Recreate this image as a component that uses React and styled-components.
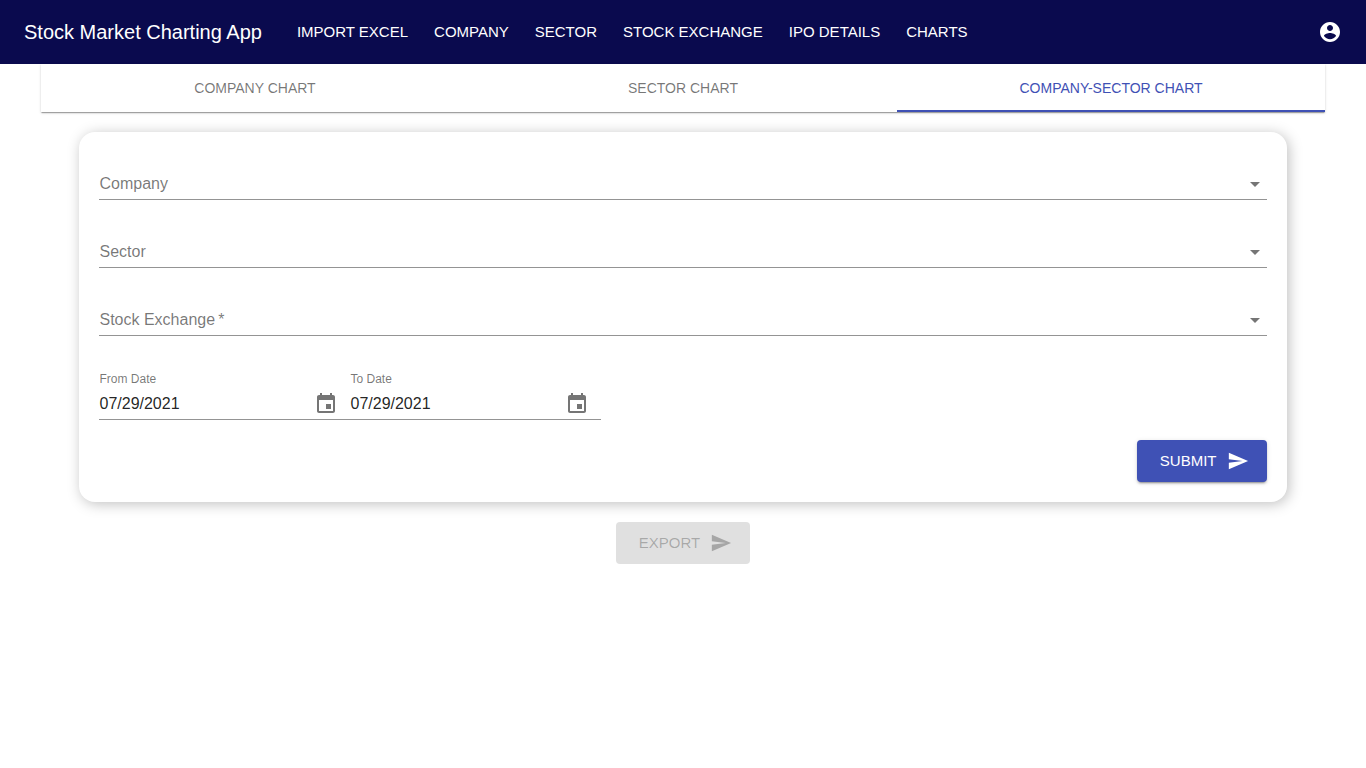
import React, { useState } from "react";
import styled, { createGlobalStyle, css } from "styled-components";

const GlobalStyle = createGlobalStyle`
  *, *::before, *::after { box-sizing: border-box; }
  body {
    margin: 0;
    background: #fff;
    color: rgba(0, 0, 0, 0.87);
    font-family: "Liberation Sans", Arial, sans-serif;
    font-size: 16px;
    line-height: 20px;
  }
  button, input, select { font: inherit; color: inherit; }
`;

const resetButton = css`
  border: 0;
  margin: 0;
  background: transparent;
  cursor: pointer;
`;

const AppBar = styled.header`
  display: flex;
  align-items: center;
  min-height: 64px;
  padding: 0 24px;
  background: #0a0a4e;
  color: #fff;
`;

const Title = styled.h1`
  margin: 0 35px 0 0;
  font-size: 20px;
  font-weight: 400;
  line-height: 32px;
`;

const Nav = styled.nav`
  display: flex;
  flex: 1;
  flex-wrap: wrap;
  gap: 0 26px;
`;

const NavLink = styled.a`
  color: inherit;
  font-size: 15px;
  line-height: 26px;
  text-decoration: none;
  text-transform: uppercase;
`;

const AccountButton = styled.button`
  ${resetButton}
  display: flex;
  padding: 0;
`;

const Icon = styled.svg`
  display: block;
  flex: none;
  width: ${(p) => p.$size || 24}px;
  height: ${(p) => p.$size || 24}px;
  fill: currentColor;
`;

const Page = styled.main`
  padding: 0 3%;
`;

const TabBar = styled.div`
  display: grid;
  grid-template-columns: repeat(3, 1fr);
  background: #fff;
  box-shadow: 0 2px 1px -1px rgba(0, 0, 0, 0.2), 0 1px 1px rgba(0, 0, 0, 0.14),
    0 1px 3px rgba(0, 0, 0, 0.12);
`;

const Tab = styled.button`
  ${resetButton}
  height: 48px;
  padding: 0 12px;
  color: ${(p) => (p.$active ? "#3f51b5" : "rgba(0, 0, 0, 0.54)")};
  box-shadow: ${(p) => (p.$active ? "inset 0 -2px #3f51b5" : "none")};
  font-size: 14px;
  text-transform: uppercase;
`;

const Card = styled.form`
  display: grid;
  gap: 20px;
  margin: 20px 3%;
  padding: 20px;
  border-radius: 16px;
  background: #fff;
  box-shadow: 2px 2px 14px rgba(0, 0, 0, 0.25);
`;

const SelectField = styled.div`
  display: grid;
  align-items: center;
  height: 48px;
  padding-top: 16px;
  border-bottom: 1px solid #949494;

  > * { grid-area: 1 / 1; }
`;

const SelectLabel = styled.label`
  color: rgba(0, 0, 0, 0.54);
  pointer-events: none;
  ${(p) => p.$raised && css`
    align-self: start;
    margin-top: -20px;
    font-size: 12px;
  `}
`;

const Select = styled.select`
  appearance: none;
  width: 100%;
  height: 31px;
  padding: 0 24px 0 0;
  border: 0;
  background: transparent;
  outline: none;
`;

const Arrow = styled(Icon)`
  justify-self: end;
  color: rgba(0, 0, 0, 0.54);
  pointer-events: none;
`;

const DateRow = styled.div`
  display: flex;
  padding-top: 16px;
`;

const DateField = styled.div`
  display: grid;
  grid-template-columns: 1fr auto;
  width: 251px;
  height: 48px;
  padding-bottom: 1px;
  border-bottom: 1px solid #949494;
`;

const DateLabel = styled.label`
  grid-column: 1 / -1;
  color: rgba(0, 0, 0, 0.54);
  font-size: 12px;
  line-height: 14px;
`;

const DateInput = styled.input`
  width: 100%;
  min-width: 0;
  padding: 0;
  border: 0;
  background: transparent;
  outline: none;
`;

const CalendarButton = styled.button`
  ${resetButton}
  display: flex;
  align-items: center;
  padding: 0 12px;
  color: rgba(0, 0, 0, 0.54);
`;

const Actions = styled.div`
  display: flex;
  justify-content: ${(p) => p.$align};
`;

const ActionButton = styled.button`
  ${resetButton}
  display: flex;
  align-items: center;
  gap: 10px;
  height: 42px;
  padding: 0 18px 0 23px;
  border-radius: 4px;
  background: #3f51b5;
  color: #fff;
  font-size: 15px;
  text-transform: uppercase;
  box-shadow: 0 3px 1px -2px rgba(0, 0, 0, 0.2), 0 2px 2px rgba(0, 0, 0, 0.14),
    0 1px 5px rgba(0, 0, 0, 0.12);

  &:disabled {
    background: #e0e0e0;
    color: rgba(0, 0, 0, 0.26);
    box-shadow: none;
    cursor: default;
  }
`;

const NAV_ITEMS = ["Import Excel", "Company", "Sector", "Stock Exchange", "IPO Details", "Charts"];
const TABS = ["Company Chart", "Sector Chart", "Company-Sector Chart"];

const SendIcon = () => (
  <Icon $size={22} viewBox="0 0 24 24" aria-hidden="true">
    <path d="M2.01 21L23 12 2.01 3 2 10l15 2-15 2z" />
  </Icon>
);

function SelectBox({ id, label, options, required }) {
  const [value, setValue] = useState("");
  return (
    <SelectField>
      <SelectLabel htmlFor={id} $raised={value !== ""}>
        {label}
        {required && "\u2009*"}
      </SelectLabel>
      <Select id={id} value={value} required={required} onChange={(e) => setValue(e.target.value)}>
        <option value="" />
        {options.map((o) => (
          <option key={o}>{o}</option>
        ))}
      </Select>
      <Arrow viewBox="0 0 24 24" aria-hidden="true">
        <path d="M7 10l5 5 5-5z" />
      </Arrow>
    </SelectField>
  );
}

function DateBox({ id, label }) {
  const [value, setValue] = useState("07/29/2021");
  return (
    <DateField>
      <DateLabel htmlFor={id}>{label}</DateLabel>
      <DateInput id={id} type="text" value={value} onChange={(e) => setValue(e.target.value)} />
      <CalendarButton type="button" aria-label={`Choose ${label}`}>
        <Icon viewBox="0 0 24 24" aria-hidden="true">
          <path d="M17 12h-5v5h5v-5zM16 1v2H8V1H6v2H5c-1.11 0-1.99.9-1.99 2L3 19c0 1.1.89 2 2 2h14c1.1 0 2-.9 2-2V5c0-1.1-.9-2-2-2h-1V1h-2zm3 18H5V8h14v11z" />
        </Icon>
      </CalendarButton>
    </DateField>
  );
}

export default function App() {
  const [tab, setTab] = useState(2);
  return (
    <>
      <GlobalStyle />
      <AppBar>
        <Title>Stock Market Charting App</Title>
        <Nav>
          {NAV_ITEMS.map((item) => (
            <NavLink key={item} href="#">{item}</NavLink>
          ))}
        </Nav>
        <AccountButton type="button" aria-label="Account">
          <Icon viewBox="0 0 24 24" aria-hidden="true">
            <path d="M12 2C6.48 2 2 6.48 2 12s4.48 10 10 10 10-4.48 10-10S17.52 2 12 2zm0 3c1.66 0 3 1.34 3 3s-1.34 3-3 3-3-1.34-3-3 1.34-3 3-3zm0 14.2c-2.5 0-4.71-1.28-6-3.22.03-1.99 4-3.08 6-3.08 1.99 0 5.97 1.09 6 3.08-1.29 1.94-3.5 3.22-6 3.22z" />
          </Icon>
        </AccountButton>
      </AppBar>
      <Page>
        <TabBar role="tablist">
          {TABS.map((name, i) => (
            <Tab key={name} type="button" role="tab" aria-selected={tab === i} $active={tab === i} onClick={() => setTab(i)}>
              {name}
            </Tab>
          ))}
        </TabBar>
        <Card onSubmit={(e) => e.preventDefault()}>
          <SelectBox id="company" label="Company" options={[]} />
          <SelectBox id="sector" label="Sector" options={[]} />
          <SelectBox id="exchange" label="Stock Exchange" options={[]} required />
          <DateRow>
            <DateBox id="from-date" label="From Date" />
            <DateBox id="to-date" label="To Date" />
          </DateRow>
          <Actions $align="flex-end">
            <ActionButton type="submit">Submit<SendIcon /></ActionButton>
          </Actions>
        </Card>
        <Actions $align="center">
          <ActionButton type="button" disabled>Export<SendIcon /></ActionButton>
        </Actions>
      </Page>
    </>
  );
}
